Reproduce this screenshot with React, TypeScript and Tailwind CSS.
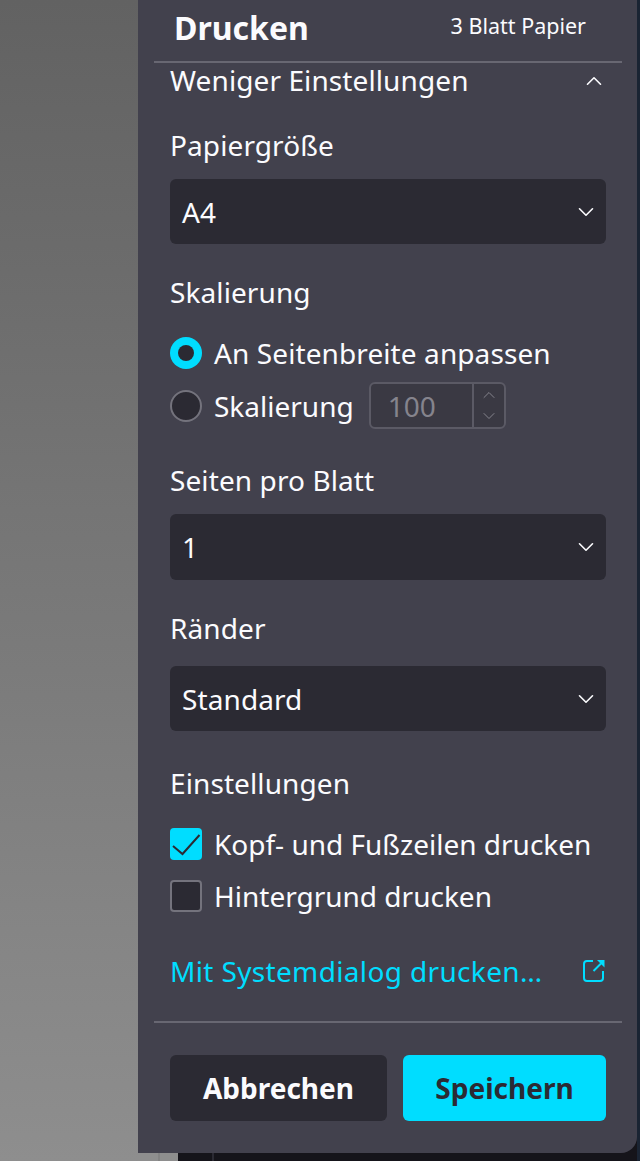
import React from 'react';
import { ChevronDown, ChevronUp } from 'lucide-react';

const Label: React.FC<{ children: React.ReactNode; className?: string }> = ({ children, className }) => (
  <div className={`text-[28px] leading-[36px] tracking-[0.1px] text-[#fbfbfe] ${className ?? ''}`}>{children}</div>
);

const SelectBox: React.FC<{ value: string; h: string }> = ({ value, h }) => (
  <div className={`flex items-center justify-between rounded-[6px] bg-[#2b2a33] pl-3 pr-[7px] text-[28px] tracking-[0.1px] text-[#fbfbfe] ${h}`}>
    <span>{value}</span>
    <ChevronDown size={26} strokeWidth={1.5} />
  </div>
);

export default function App() {
  return (
    <div className="flex h-[1161px] w-[640px] overflow-hidden bg-[#15141a] font-['Noto_Sans',sans-serif]">
      <div className="w-[138px] shrink-0 bg-gradient-to-b from-[#626262] to-[#8e8e8e]" />
      <div className="flex w-[499px] shrink-0 flex-col">
        <div className="flex h-[1153px] shrink-0 flex-col rounded-br-[16px] bg-[#42414d] pl-4 pr-[15px]">
          <div className="flex h-[61px] items-center justify-between pb-[6px] pl-5 pr-[36px]">
            <span className="text-[32px] font-bold text-[#fbfbfe]">Drucken</span>
            <span className="-mt-[2px] text-[21.5px] text-[#fbfbfe]">3 Blatt Papier</span>
          </div>
          <div className="h-[2px] bg-[#686772]" />
          <div className="flex flex-col px-4">
            <div className="flex h-[36px] items-center justify-between">
              <Label className="-mt-[2px]">Weniger Einstellungen</Label>
              <ChevronUp size={26} strokeWidth={1.5} className="-mr-[1px] text-[#fbfbfe]" />
            </div>
            <Label className="mt-[28px]">Papiergröße</Label>
            <SelectBox value="A4" h="mt-[16px] h-[65px]" />
            <Label className="mt-[30px]">Skalierung</Label>
            <div className="mt-[25px] flex h-[36px] items-center gap-[12px]">
              <div className="flex h-8 w-8 items-center justify-center rounded-full bg-[#00ddff]">
                <div className="h-[16px] w-[16px] rounded-full bg-[#2b2a33]" />
              </div>
              <span className="text-[28px] tracking-[0.1px] text-[#fbfbfe]">An Seitenbreite anpassen</span>
            </div>
            <div className="mt-[11px] flex h-[47px] items-center gap-[12px]">
              <div className="h-8 w-8 rounded-full border-2 border-[#74737d] bg-[#2b2a33]" />
              <span className="text-[28px] text-[#fbfbfe]">Skalierung</span>
              <div className="ml-[3px] flex h-[47px] w-[137px] rounded-[6px] border-2 border-[#5b5a65] bg-[#3a3943]">
                <div className="flex flex-1 items-center pl-[17px] text-[28px] text-[#85848d]">100</div>
                <div className="flex w-[32px] flex-col items-center justify-center gap-[1px] border-l-2 border-[#5b5a65] text-[#85848d]">
                  <ChevronUp size={20} strokeWidth={1.2} />
                  <ChevronDown size={20} strokeWidth={1.2} />
                </div>
              </div>
            </div>
            <Label className="mt-[33px]">Seiten pro Blatt</Label>
            <SelectBox value="1" h="mt-[16px] h-[66px]" />
            <Label className="mt-[30px]">Ränder</Label>
            <SelectBox value="Standard" h="mt-[20px] h-[65px]" />
            <Label className="mt-[34px]">Einstellungen</Label>
            <div className="mt-[25px] flex h-[36px] items-center gap-[12px]">
              <div className="flex h-8 w-8 items-center justify-center rounded-[4px] bg-[#00ddff]">
                <svg width="32" height="32" viewBox="0 0 32 32" fill="none" stroke="#2b2a33" strokeWidth="2">
                  <path d="M3 18 L12.5 26 L29.5 7" />
                </svg>
              </div>
              <span className="text-[28px] text-[#fbfbfe]">Kopf- und Fußzeilen drucken</span>
            </div>
            <div className="mt-[16px] flex h-[36px] items-center gap-[12px]">
              <div className="h-8 w-8 rounded-[4px] border-2 border-[#74737d] bg-[#2b2a33]" />
              <span className="text-[28px] text-[#fbfbfe]">Hintergrund drucken</span>
            </div>
            <div className="mt-[39px] flex h-[36px] items-center justify-between text-[#00ddff]">
              <span className="text-[28px] tracking-[0.35px]">Mit Systemdialog drucken…</span>
              <svg width="22" height="22" viewBox="0 0 22 22" fill="none" stroke="currentColor" strokeWidth="2" className="mr-[1px]">
                <path d="M10 1 H4 a3 3 0 0 0 -3 3 V18 a3 3 0 0 0 3 3 H17 a3 3 0 0 0 3 -3 V11" />
                <path d="M10.5 11 L18 3.5" />
                <path d="M14 0 H21.5 V7.5 Z" fill="currentColor" stroke="none" />
              </svg>
            </div>
          </div>
          <div className="mt-[32px] h-[2px] bg-[#686772]" />
          <div className="mt-[32px] flex gap-4 px-4">
            <div className="flex h-[66px] w-[217px] items-center justify-center rounded-[6px] bg-[#2b2a33] text-[28px] font-bold text-[#fbfbfe]">Abbrechen</div>
            <div className="flex h-[66px] flex-1 items-center justify-center rounded-[6px] bg-[#00ddff] text-[28px] font-bold text-[#2b2a33]">Speichern</div>
          </div>
        </div>
        <div className="flex flex-1">
          <div className="w-[20px] bg-[#8e8e8e]" />
          <div className="w-[2px] bg-[#838383]" />
          <div className="w-[18px] bg-[#8e8e8e]" />
          <div className="w-[34px]" />
          <div className="w-[2px] bg-[#2b2a33]" />
        </div>
      </div>
      <div className="flex-1 bg-[#1a2433]" />
    </div>
  );
}
